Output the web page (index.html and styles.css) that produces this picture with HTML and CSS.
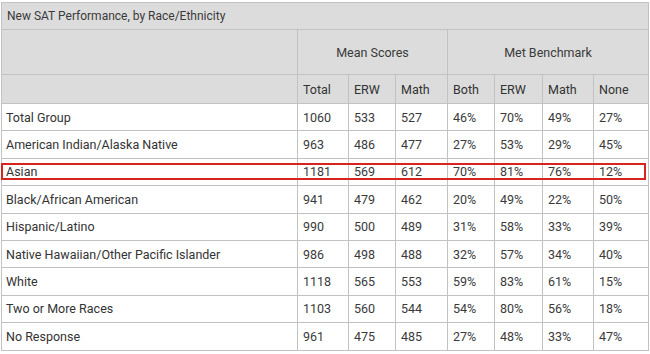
FILE: index.html
```html
<!DOCTYPE html>
<html>
<head>
<meta charset="utf-8">
<link rel="stylesheet" href="styles.css">
</head>
<body>
<div class="wrap">
<table class="sat">
<colgroup>
<col class="c-name"><col class="c1"><col class="c2"><col class="c3"><col class="c4"><col class="c5"><col class="c6"><col class="c7">
</colgroup>
<thead>
<tr class="title"><th colspan="8">New SAT Performance, by Race/Ethnicity</th></tr>
<tr class="grp"><th></th><th colspan="3">Mean Scores</th><th colspan="4">Met Benchmark</th></tr>
<tr class="sub"><th></th><th>Total</th><th>ERW</th><th>Math</th><th>Both</th><th>ERW</th><th>Math</th><th>None</th></tr>
</thead>
<tbody>
<tr><td class="name">Total Group</td><td>1060</td><td>533</td><td>527</td><td>46%</td><td>70%</td><td>49%</td><td>27%</td></tr>
<tr><td class="name">American Indian/Alaska Native</td><td>963</td><td>486</td><td>477</td><td>27%</td><td>53%</td><td>29%</td><td>45%</td></tr>
<tr><td class="name">Asian</td><td>1181</td><td>569</td><td>612</td><td>70%</td><td>81%</td><td>76%</td><td>12%</td></tr>
<tr><td class="name">Black/African American</td><td>941</td><td>479</td><td>462</td><td>20%</td><td>49%</td><td>22%</td><td>50%</td></tr>
<tr><td class="name">Hispanic/Latino</td><td>990</td><td>500</td><td>489</td><td>31%</td><td>58%</td><td>33%</td><td>39%</td></tr>
<tr><td class="name">Native Hawaiian/Other Pacific Islander</td><td>986</td><td>498</td><td>488</td><td>32%</td><td>57%</td><td>34%</td><td>40%</td></tr>
<tr><td class="name">White</td><td>1118</td><td>565</td><td>553</td><td>59%</td><td>83%</td><td>61%</td><td>15%</td></tr>
<tr><td class="name">Two or More Races</td><td>1103</td><td>560</td><td>544</td><td>54%</td><td>80%</td><td>56%</td><td>18%</td></tr>
<tr><td class="name">No Response</td><td>961</td><td>475</td><td>485</td><td>27%</td><td>48%</td><td>33%</td><td>47%</td></tr>
</tbody>
</table>
<div class="highlight"></div>
</div>
</body>
</html>
```
FILE: styles.css
```css
html, body {
  margin: 0;
  padding: 0;
  background: #fff;
}
.wrap {
  position: relative;
  padding: 2px 0 0 1px;
  width: 650px;
  height: 354px;
  box-sizing: border-box;
}
.sat {
  border-collapse: collapse;
  table-layout: fixed;
  width: 647px;
  font-family: Roboto, "Liberation Sans", sans-serif;
  font-size: 12.5px;
  color: #3a3a3a;
}
.c-name { width: 296px; }
.c1 { width: 51px; }
.c2 { width: 47px; }
.c3 { width: 52px; }
.c4 { width: 47px; }
.c5 { width: 48px; }
.c6 { width: 51px; }
.c7 { width: 55px; }
.sat th, .sat td {
  border: 1px solid #c2c2c2;
  padding: 0 5px;
  text-align: left;
  font-weight: normal;
  white-space: nowrap;
  overflow: hidden;
}
.sat thead th {
  background: #dcdcdc;
}
.title th {
  height: 26px;
  font-size: 12px;
  padding-left: 5px;
}
.grp th {
  height: 44px;
  text-align: center;
}
.sub th {
  height: 28px;
  color: #333;
}
.sat tbody td {
  height: 26.4px;
  background: #fff;
}
.sat td.name {
  color: #333;
  padding-left: 4px;
}
.highlight {
  position: absolute;
  left: 1px;
  top: 163px;
  width: 645px;
  height: 17px;
  border: 2px solid #d8231f;
  box-sizing: border-box;
  pointer-events: none;
}
```
